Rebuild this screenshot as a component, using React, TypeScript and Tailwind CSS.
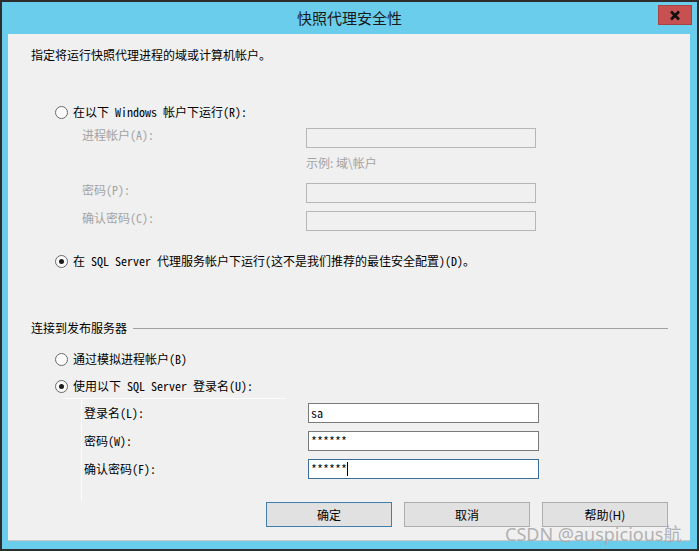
import React from "react";

const MONO = "font-['Noto_Sans_Mono_CJK_SC','Noto_Sans_CJK_SC',monospace]";
const SANS = "font-['Noto_Sans_CJK_SC','Noto_Sans',sans-serif]";

function Radio({ checked }: { checked?: boolean }) {
  return (
    <span className="w-[13px] h-[13px] rounded-full border border-[#6a6a6a] bg-[#fbfbfb] flex items-center justify-center shrink-0">
      {checked && <span className="w-[5px] h-[5px] rounded-full bg-[#1c1c1c]" />}
    </span>
  );
}

function DisabledBox() {
  return <div className="w-[230px] h-[20px] border border-[#b4b6b8] bg-[#f0f0f0]" />;
}

function TextBox({ value, focused, caret }: { value: string; focused?: boolean; caret?: boolean }) {
  return (
    <div
      className={
        "w-[231px] h-[20px] bg-white flex items-center pl-[2px] border " +
        (focused ? "border-[#3a6d9a]" : "border-[#7a7a7a]")
      }
    >
      <span className={MONO + " text-[12px] leading-[14px] text-black"}>{value}</span>
      {caret && <span className="w-px h-[14px] bg-black" />}
    </div>
  );
}

function Button({ label, primary }: { label: string; primary?: boolean }) {
  return (
    <div
      className={
        "w-[126px] h-[25px] bg-[#e1e1e1] border flex items-center justify-center " +
        (primary ? "border-[#3c7fb1]" : "border-[#adadad]")
      }
    >
      <span className={SANS + " text-[12px] leading-[14px] text-black"}>{label}</span>
    </div>
  );
}

export default function App() {
  return (
    <div className="relative w-[699px] h-[551px] border-2 border-[#2d2d2d] bg-[#6acdeb] flex flex-col overflow-hidden">
      {/* Title bar */}
      <div className="relative h-[32px] shrink-0 flex items-center justify-center">
        <span className={SANS + " text-[15px] leading-[18px] text-[#1a1a1a]"}>快照代理安全性</span>
        <div className="absolute top-[3px] right-[5px] z-10 w-[34px] h-[20px] bg-[#c75050] border border-[#a94343] flex items-center justify-center">
          <svg width="12" height="11" viewBox="0 0 12 11" fill="none" style={{ display: "block" }}>
            <line x1="2" y1="1.5" x2="10" y2="9.5" stroke="#101010" strokeWidth="2.6" />
            <line x1="10" y1="1.5" x2="2" y2="9.5" stroke="#101010" strokeWidth="2.6" />
          </svg>
        </div>
      </div>

      {/* Content */}
      <div className="ml-[6px] mr-[7px] h-[507px] bg-[#f0f0f0] border-b border-[#c9c9c9] flex flex-col text-black">
        <div className="mt-[13px] h-[16px] pl-[23px] flex items-center">
          <span className={SANS + " text-[12px] leading-[16px]"}>指定将运行快照代理进程的域或计算机帐户。</span>
        </div>

        {/* radio 1 */}
        <div className="mt-[41px] h-[16px] pl-[47px] flex items-center gap-[5px]">
          <Radio />
          <span className={MONO + " text-[12px] leading-[16px] whitespace-pre"}>在以下 Windows 帐户下运行(R):</span>
        </div>

        <div className="mt-[8px] h-[20px] flex items-start">
          <span className={MONO + " w-[298px] shrink-0 pl-[74px] text-[12px] leading-[14px] text-[#a3a3a3]"}>进程帐户(A):</span>
          <DisabledBox />
        </div>
        <div className="mt-[7px] h-[16px] pl-[298px] flex items-center">
          <span className={SANS + " text-[12px] leading-[16px] text-[#a3a3a3]"}>示例: 域\帐户</span>
        </div>
        <div className="mt-[12px] h-[20px] flex items-start">
          <span className={MONO + " w-[298px] shrink-0 pl-[74px] text-[12px] leading-[14px] text-[#a3a3a3]"}>密码(P):</span>
          <DisabledBox />
        </div>
        <div className="mt-[8px] h-[20px] flex items-start">
          <span className={MONO + " w-[298px] shrink-0 pl-[74px] text-[12px] leading-[14px] text-[#a3a3a3]"}>确认密码(C):</span>
          <DisabledBox />
        </div>

        {/* radio 2 */}
        <div className="mt-[22px] h-[16px] pl-[47px] flex items-center gap-[5px]">
          <Radio checked />
          <span className={MONO + " text-[12px] leading-[16px] whitespace-pre"}>
            在 SQL Server 代理服务帐户下运行(这不是我们推荐的最佳安全配置)(D)。
          </span>
        </div>

        {/* section header */}
        <div className="mt-[51px] h-[16px] pl-[23px] pr-[22px] flex items-center gap-[6px]">
          <span className={SANS + " text-[12px] leading-[16px] shrink-0"}>连接到发布服务器</span>
          <div className="flex-1 h-px bg-[#a0a0a0]" />
        </div>

        {/* radio 3 */}
        <div className="mt-[15px] h-[16px] pl-[47px] flex items-center gap-[5px]">
          <Radio />
          <span className={MONO + " text-[12px] leading-[16px] whitespace-pre"}>通过模拟进程帐户(B)</span>
        </div>
        {/* radio 4 */}
        <div className="mt-[11px] h-[16px] pl-[47px] flex items-center gap-[5px]">
          <Radio checked />
          <span className={MONO + " text-[12px] leading-[16px] whitespace-pre"}>使用以下 SQL Server 登录名(U):</span>
        </div>

        {/* group */}
        <div className="mt-[4px] ml-[57px] w-[221px] h-px bg-[#fcfcfc]" />
        <div className="ml-[73px] h-[102px] border-l border-[#fcfcfc] flex flex-col">
          <div className="mt-[4px] h-[20px] flex items-center">
            <span className={MONO + " w-[226px] shrink-0 pl-[2px] text-[12px] leading-[14px]"}>登录名(L):</span>
            <TextBox value="sa" />
          </div>
          <div className="mt-[8px] h-[20px] flex items-center">
            <span className={MONO + " w-[226px] shrink-0 pl-[2px] text-[12px] leading-[14px]"}>密码(W):</span>
            <TextBox value="******" />
          </div>
          <div className="mt-[8px] h-[20px] flex items-center">
            <span className={MONO + " w-[226px] shrink-0 pl-[2px] text-[12px] leading-[14px]"}>确认密码(F):</span>
            <TextBox value="******" focused caret />
          </div>
        </div>

        {/* buttons */}
        <div className="mt-px pl-[258px] flex items-center gap-[12px]">
          <Button label="确定" primary />
          <Button label="取消" />
          <Button label="帮助(H)" />
        </div>
      </div>

      {/* watermark */}
      <div className="absolute left-[503px] top-[523px]">
        <span className={"block font-['Noto_Sans','Noto_Sans_CJK_SC',sans-serif] text-[18px] leading-[18px] text-[#a9a9a9]/90"}>
          CSDN @auspicious航
        </span>
      </div>
    </div>
  );
}
